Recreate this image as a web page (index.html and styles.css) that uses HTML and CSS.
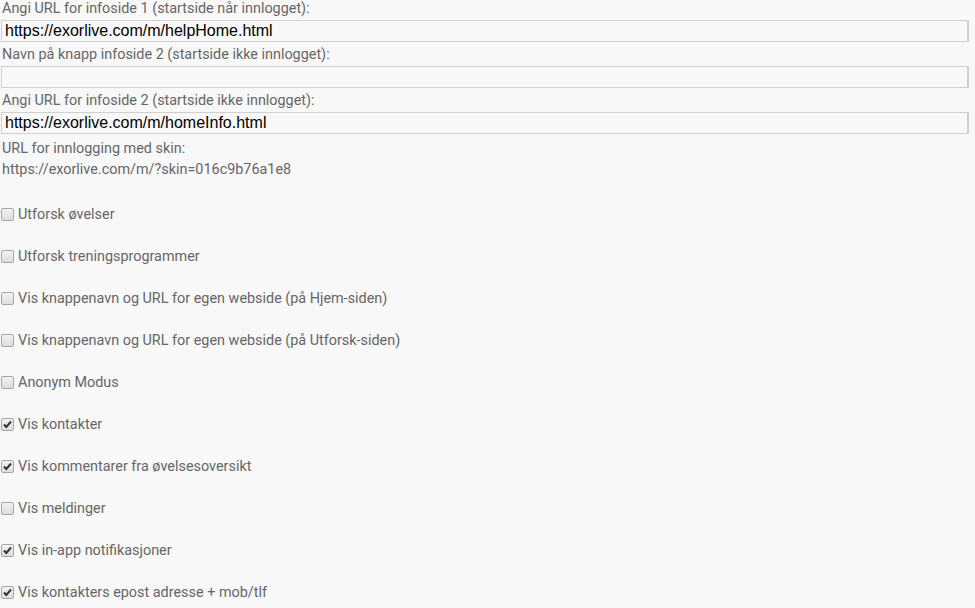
FILE: index.html
```html
<!DOCTYPE html>
<html lang="no">
<head>
  <meta charset="UTF-8" />
  <title>Innstillinger</title>
  <link rel="stylesheet" href="styles.css">
</head>
<body>
  <div class="settings">
    <div class="field">
      <label for="url1">Angi URL for infoside 1 (startside når innlogget):</label>
      <input type="text" id="url1" value="https://exorlive.com/m/helpHome.html" />
    </div>
    <div class="field">
      <label for="name2">Navn på knapp infoside 2 (startside ikke innlogget):</label>
      <input type="text" id="name2" value="" />
    </div>
    <div class="field">
      <label for="url2">Angi URL for infoside 2 (startside ikke innlogget):</label>
      <input type="text" id="url2" value="https://exorlive.com/m/homeInfo.html" />
    </div>
    <div class="skin">
      <div>URL for innlogging med skin:</div>
      <div>https://exorlive.com/m/?skin=016c9b76a1e8</div>
    </div>

    <ul class="options">
      <li><span class="box"></span>Utforsk øvelser</li>
      <li><span class="box"></span>Utforsk treningsprogrammer</li>
      <li><span class="box"></span>Vis knappenavn og URL for egen webside (på Hjem-siden)</li>
      <li><span class="box"></span>Vis knappenavn og URL for egen webside (på Utforsk-siden)</li>
      <li><span class="box"></span>Anonym Modus</li>
      <li><span class="box checked"><svg viewBox="0 0 11 11"><path d="M2 5.5 L4.3 8 L9 2.5" /></svg></span>Vis kontakter</li>
      <li><span class="box checked"><svg viewBox="0 0 11 11"><path d="M2 5.5 L4.3 8 L9 2.5" /></svg></span>Vis kommentarer fra øvelsesoversikt</li>
      <li><span class="box"></span>Vis meldinger</li>
      <li><span class="box checked"><svg viewBox="0 0 11 11"><path d="M2 5.5 L4.3 8 L9 2.5" /></svg></span>Vis in-app notifikasjoner</li>
      <li><span class="box checked"><svg viewBox="0 0 11 11"><path d="M2 5.5 L4.3 8 L9 2.5" /></svg></span>Vis kontakters epost adresse + mob/tlf</li>
    </ul>
  </div>
</body>
</html>
```

FILE: styles.css
```css
body {
  margin: 0;
  background: #f8f8f8;
  font-family: Roboto, "Liberation Sans", sans-serif;
  font-size: 14.4px;
  color: #666;
}
.settings {
  padding: 0 1px;
  width: 968px;
}
.field {
  margin-bottom: 4px;
}
.field label {
  display: block;
  line-height: 18px;
  padding-left: 1px;
  margin-bottom: 2px;
}
.field input {
  display: block;
  box-sizing: border-box;
  width: 968px;
  height: 22px;
  margin: 0;
  padding: 0 3px;
  border: 1px solid #d0d0d0;
  border-right-width: 2px;
  background: #f8f8f8;
  font-family: "Liberation Sans", Arial, sans-serif;
  font-size: 16px;
  color: #000;
}
.skin {
  padding-left: 1px;
  line-height: 21px;
}
.options {
  list-style: none;
  margin: 24px 0 0;
  padding: 0;
}
.options li {
  display: flex;
  align-items: center;
  height: 20px;
  margin-bottom: 22px;
}
.box {
  box-sizing: border-box;
  width: 13px;
  height: 13px;
  margin-right: 4px;
  border: 1px solid #a6a6a6;
  border-radius: 2px;
  background: linear-gradient(#f2f2f2, #dedede);
  display: flex;
}
.box svg {
  width: 11px;
  height: 11px;
}
.box path {
  fill: none;
  stroke: #333;
  stroke-width: 2;
}
```
